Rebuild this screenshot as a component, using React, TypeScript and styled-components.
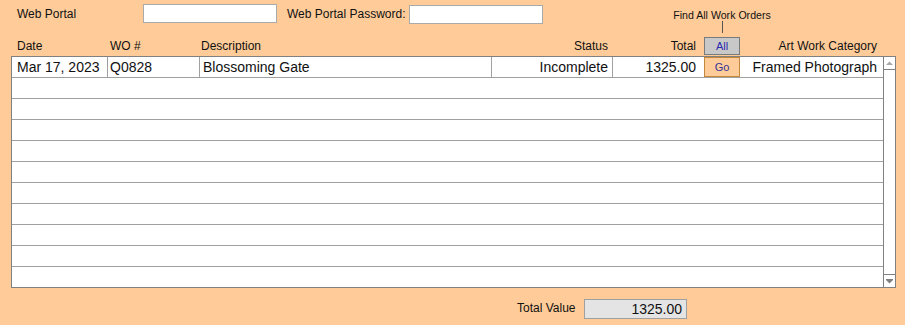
import React from "react";
import styled, { createGlobalStyle } from "styled-components";

const GlobalStyle = createGlobalStyle`
  html, body { margin: 0; padding: 0; background: #ffcc99; }
  body { font-family: "Liberation Sans", Arial, sans-serif; color: #111; }
  * { box-sizing: border-box; }
`;

const COLS = "96px 92px 292px 121px 91px 36px 143px";

const Page = styled.div`
  width: 905px;
  height: 325px;
  background: #ffcc99;
  overflow: hidden;
`;

const TopBar = styled.div`
  display: flex;
  align-items: flex-start;
  height: 36px;
  padding: 4px 0 0 17px;
`;

const Label = styled.span<{ $w: number; $ml?: number }>`
  display: block;
  width: ${(p) => p.$w}px;
  margin-left: ${(p) => p.$ml ?? 0}px;
  font-size: 12px;
  line-height: 21px;
  white-space: nowrap;
`;

const TextInput = styled.div<{ $mt?: number }>`
  width: 134px;
  height: 19px;
  margin-top: ${(p) => p.$mt ?? 0}px;
  background: #fff;
  border: 1px solid #aaaaaa;
`;

const FindBlock = styled.div`
  width: 110px;
  margin-left: 124px;
  display: flex;
  flex-direction: column;
  align-items: center;
`;

const Caption = styled.span`
  margin-top: 5px;
  font-size: 10.6px;
  line-height: 12px;
  white-space: nowrap;
`;

const Tick = styled.div`
  width: 1px;
  height: 12px;
  background: #555;
`;

const HeaderRow = styled.div`
  display: grid;
  grid-template-columns: ${COLS};
  margin-left: 12px;
  height: 20px;
  align-items: center;
`;

const HeadCell = styled.span<{ $align?: string; $pl?: number; $pr?: number }>`
  font-size: 12px;
  line-height: 20px;
  text-align: ${(p) => p.$align ?? "left"};
  padding-left: ${(p) => p.$pl ?? 0}px;
  padding-right: ${(p) => p.$pr ?? 0}px;
  white-space: nowrap;
`;

const AllButton = styled.div`
  align-self: start;
  margin-top: 1px;
  height: 18px;
  background: #c8c8c8;
  border: 1px solid #7a7a7a;
  color: #2a2ab0;
  font-size: 11px;
  line-height: 16px;
  text-align: center;
`;

const ListBox = styled.div`
  margin-left: 11px;
  width: 885px;
  height: 232px;
  border: 1px solid #808080;
  background: #fff;
  display: flex;
`;

const Rows = styled.div`
  width: 871px;
  height: 230px;
  overflow: hidden;
`;

const Row = styled.div`
  display: grid;
  grid-template-columns: ${COLS};
  height: 21px;
  border-bottom: 1px solid #a0a0a0;
`;

const Cell = styled.div<{ $align?: string; $pl?: number; $pr?: number; $divider?: boolean }>`
  font-size: 14px;
  line-height: 20px;
  text-align: ${(p) => p.$align ?? "left"};
  padding-left: ${(p) => p.$pl ?? 0}px;
  padding-right: ${(p) => p.$pr ?? 0}px;
  border-right: ${(p) => (p.$divider ? "1px solid #a0a0a0" : "none")};
  white-space: nowrap;
  overflow: hidden;
`;

const GoButton = styled.div`
  height: 20px;
  background: #ffcc99;
  border: 1px solid #c4883c;
  color: #333399;
  font-size: 11px;
  line-height: 18px;
  text-align: center;
`;

const ScrollBar = styled.div`
  width: 12px;
  border-left: 1px solid #808080;
  display: flex;
  flex-direction: column;
  justify-content: space-between;
`;

const ScrollBtn = styled.div<{ $top?: boolean }>`
  height: 13px;
  display: flex;
  align-items: center;
  justify-content: center;
  border-bottom: ${(p) => (p.$top ? "1px solid #808080" : "none")};
  border-top: ${(p) => (p.$top ? "none" : "1px solid #808080")};
`;

const Footer = styled.div`
  display: flex;
  align-items: center;
  padding-left: 517px;
  margin-top: 10px;
`;

const ValueBox = styled.div`
  width: 103px;
  height: 20px;
  background: #e4e4e4;
  border: 1px solid #a0a0a0;
  font-size: 14px;
  line-height: 18px;
  text-align: right;
  padding-right: 4px;
`;

const orders = [
  {
    date: "Mar 17, 2023",
    wo: "Q0828",
    desc: "Blossoming Gate",
    status: "Incomplete",
    total: "1325.00",
    category: "Framed Photograph",
  },
];

export default function App() {
  const empty = Array.from({ length: 11 - orders.length });
  return (
    <Page>
      <GlobalStyle />
      <TopBar>
        <Label $w={126}>Web Portal</Label>
        <TextInput />
        <Label $w={122} $ml={10}>Web Portal Password:</Label>
        <TextInput $mt={1} />
        <FindBlock>
          <Caption>Find All Work Orders</Caption>
          <Tick />
        </FindBlock>
      </TopBar>
      <HeaderRow>
        <HeadCell $pl={5}>Date</HeadCell>
        <HeadCell $pl={2}>WO #</HeadCell>
        <HeadCell $pl={1}>Description</HeadCell>
        <HeadCell $align="right" $pr={5}>Status</HeadCell>
        <HeadCell $align="right" $pr={8}>Total</HeadCell>
        <AllButton>All</AllButton>
        <HeadCell $align="right" $pr={6}>Art Work Category</HeadCell>
      </HeaderRow>
      <ListBox>
        <Rows>
          {orders.map((o) => (
            <Row key={o.wo}>
              <Cell $pl={5} $divider>{o.date}</Cell>
              <Cell $pl={2} $divider>{o.wo}</Cell>
              <Cell $pl={3} $divider>{o.desc}</Cell>
              <Cell $align="right" $pr={4} $divider>{o.status}</Cell>
              <Cell $align="right" $pr={8}>{o.total}</Cell>
              <GoButton>Go</GoButton>
              <Cell $align="right" $pr={6}>{o.category}</Cell>
            </Row>
          ))}
          {empty.map((_, i) => (
            <Row key={i} />
          ))}
        </Rows>
        <ScrollBar>
          <ScrollBtn $top>
            <svg width="7" height="5" viewBox="0 0 7 5">
              <path d="M0 4 L3.5 0.5 L7 4 Z" fill="#a8a8a8" />
            </svg>
          </ScrollBtn>
          <ScrollBtn>
            <svg width="7" height="5" viewBox="0 0 7 5">
              <rect x="0" y="0" width="7" height="1" fill="#808080" />
              <path d="M0 1 L3.5 4.5 L7 1 Z" fill="#808080" />
            </svg>
          </ScrollBtn>
        </ScrollBar>
      </ListBox>
      <Footer>
        <Label $w={67}>Total Value</Label>
        <ValueBox>1325.00</ValueBox>
      </Footer>
    </Page>
  );
}
